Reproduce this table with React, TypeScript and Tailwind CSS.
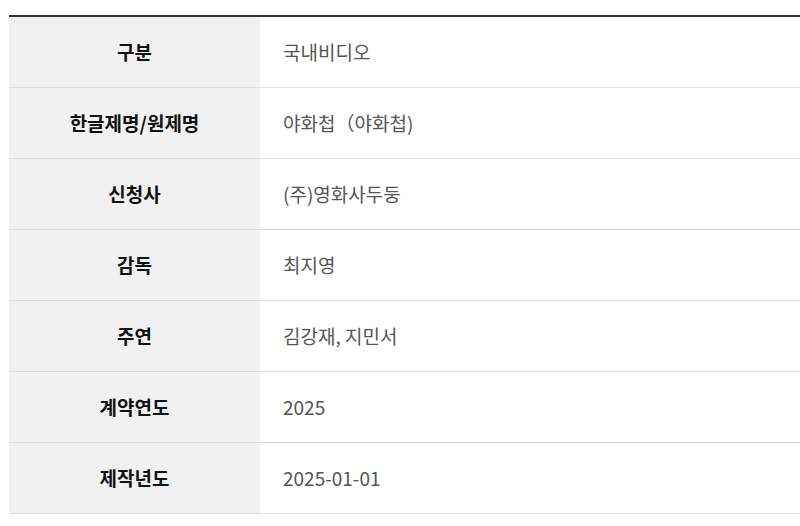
import React from "react";

const rows: [string, string][] = [
  ["구분", "국내비디오"],
  ["한글제명/원제명", "야화첩（야화첩)"],
  ["신청사", "(주)영화사두둥"],
  ["감독", "최지영"],
  ["주연", "김강재, 지민서"],
  ["계약연도", "2025"],
  ["제작년도", "2025-01-01"],
];

export default function App() {
  return (
    <div
      className="w-[800px] h-[526px] bg-white pt-[15px] pl-[9px]"
      style={{ fontFamily: '"Noto Sans CJK KR", "Noto Sans", sans-serif' }}
    >
      <div className="border-t-2 border-[#333333]">
        {rows.map(([k, v]) => (
          <div key={k} className="flex h-[71px] border-b border-[#dddddd]">
            <div className="w-[251px] shrink-0 bg-[#f1f1f1] flex items-center justify-center text-[19px] font-bold text-[#111111]">
              {k}
            </div>
            <div className="flex-1 flex items-center pl-[23px] text-[19px] text-[#555555]">
              {v}
            </div>
          </div>
        ))}
      </div>
    </div>
  );
}
